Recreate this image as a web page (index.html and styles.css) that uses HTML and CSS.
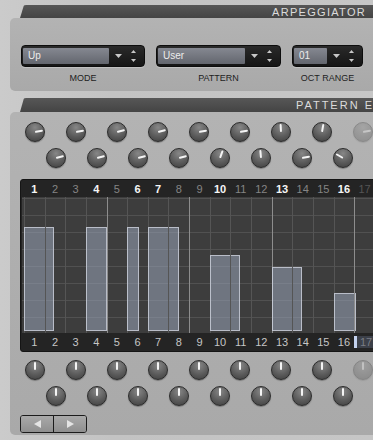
FILE: index.html
```html
<!DOCTYPE html>
<html lang="en">
<head>
    <meta charset="UTF-8">
    <meta name="viewport" content="width=device-width, initial-scale=1.0">
    <title>Arpeggiator</title>
    <link rel="stylesheet" href="styles.css">
</head>
<body>
    <div class="section arp">
        <div class="tab"><span>ARPEGGIATOR</span></div>
        <div class="panel arp-panel">
            <div class="control">
                <div class="select mode">
                    <div class="field">Up</div>
                    <svg class="drop" width="7" height="4" viewBox="0 0 7 4"><polygon points="0,0 7,0 3.5,4"/></svg>
                    <svg class="spin" width="5" height="12" viewBox="0 0 5 12"><polygon points="2.5,0 5,3 0,3"/><polygon points="0,9 5,9 2.5,12"/></svg>
                </div>
                <div class="label">MODE</div>
            </div>
            <div class="control">
                <div class="select pattern-sel">
                    <div class="field">User</div>
                    <svg class="drop" width="7" height="4" viewBox="0 0 7 4"><polygon points="0,0 7,0 3.5,4"/></svg>
                    <svg class="spin" width="5" height="12" viewBox="0 0 5 12"><polygon points="2.5,0 5,3 0,3"/><polygon points="0,9 5,9 2.5,12"/></svg>
                </div>
                <div class="label">PATTERN</div>
            </div>
            <div class="control">
                <div class="select oct">
                    <div class="field">01</div>
                    <svg class="drop" width="7" height="4" viewBox="0 0 7 4"><polygon points="0,0 7,0 3.5,4"/></svg>
                    <svg class="spin" width="5" height="12" viewBox="0 0 5 12"><polygon points="2.5,0 5,3 0,3"/><polygon points="0,9 5,9 2.5,12"/></svg>
                </div>
                <div class="label">OCT RANGE</div>
            </div>
        </div>
    </div>

    <div class="section wide">
        <div class="tab tall"><span>PATTERN EDITOR</span></div>
        <div class="panel pattern-panel">
            <div class="knobs">
                <div class="knob" style="--a:80deg"></div>
                <div class="knob" style="--a:80deg"></div>
                <div class="knob" style="--a:76deg"></div>
                <div class="knob" style="--a:75deg"></div>
                <div class="knob" style="--a:80deg"></div>
                <div class="knob" style="--a:80deg"></div>
                <div class="knob" style="--a:-3deg"></div>
                <div class="knob" style="--a:10deg"></div>
                <div class="knob off" style="--a:80deg"></div>
            </div>
            <div class="knobs offset">
                <div class="knob" style="--a:76deg"></div>
                <div class="knob" style="--a:75deg"></div>
                <div class="knob" style="--a:76deg"></div>
                <div class="knob" style="--a:75deg"></div>
                <div class="knob" style="--a:20deg"></div>
                <div class="knob" style="--a:-5deg"></div>
                <div class="knob" style="--a:80deg"></div>
                <div class="knob" style="--a:-60deg"></div>
            </div>

            <div class="editor">
                <div class="nums top">
                    <div class="num on">1</div>
                    <div class="num">2</div>
                    <div class="num">3</div>
                    <div class="num on">4</div>
                    <div class="num">5</div>
                    <div class="num on">6</div>
                    <div class="num on">7</div>
                    <div class="num">8</div>
                    <div class="num">9</div>
                    <div class="num on">10</div>
                    <div class="num">11</div>
                    <div class="num">12</div>
                    <div class="num on">13</div>
                    <div class="num">14</div>
                    <div class="num">15</div>
                    <div class="num on">16</div>
                    <div class="num dim">17</div>
                </div>
                <div class="grid">
                    <div class="step"><div class="bar" style="width:155%;height:104px"></div></div>
                    <div class="step"></div>
                    <div class="step"></div>
                    <div class="step"><div class="bar" style="width:107%;height:104px"></div></div>
                    <div class="step beat"></div>
                    <div class="step"><div class="bar" style="width:60%;height:104px"></div></div>
                    <div class="step"><div class="bar" style="width:160%;height:104px"></div></div>
                    <div class="step"></div>
                    <div class="step beat"></div>
                    <div class="step"><div class="bar" style="width:155%;height:76px"></div></div>
                    <div class="step"></div>
                    <div class="step"></div>
                    <div class="step beat"><div class="bar" style="width:155%;height:64px"></div></div>
                    <div class="step"></div>
                    <div class="step"></div>
                    <div class="step"><div class="bar" style="width:112%;height:38px"></div></div>
                    <div class="step beat"></div>
                    <div class="step"></div>
                </div>
                <div class="nums bottom">
                    <div class="num">1</div>
                    <div class="num">2</div>
                    <div class="num">3</div>
                    <div class="num">4</div>
                    <div class="num">5</div>
                    <div class="num">6</div>
                    <div class="num">7</div>
                    <div class="num">8</div>
                    <div class="num">9</div>
                    <div class="num">10</div>
                    <div class="num">11</div>
                    <div class="num">12</div>
                    <div class="num">13</div>
                    <div class="num">14</div>
                    <div class="num">15</div>
                    <div class="num">16</div>
                    <div class="num sel">17</div>
                </div>
            </div>

            <div class="knobs low">
                <div class="knob" style="--a:0deg"></div>
                <div class="knob" style="--a:0deg"></div>
                <div class="knob" style="--a:0deg"></div>
                <div class="knob" style="--a:0deg"></div>
                <div class="knob" style="--a:0deg"></div>
                <div class="knob" style="--a:0deg"></div>
                <div class="knob" style="--a:0deg"></div>
                <div class="knob" style="--a:0deg"></div>
                <div class="knob off" style="--a:0deg"></div>
            </div>
            <div class="knobs offset">
                <div class="knob" style="--a:0deg"></div>
                <div class="knob" style="--a:0deg"></div>
                <div class="knob" style="--a:0deg"></div>
                <div class="knob" style="--a:0deg"></div>
                <div class="knob" style="--a:0deg"></div>
                <div class="knob" style="--a:0deg"></div>
                <div class="knob" style="--a:0deg"></div>
                <div class="knob" style="--a:0deg"></div>
            </div>

            <div class="nav">
                <div class="btn"><svg width="7" height="8" viewBox="0 0 7 8"><polygon points="7,0 7,8 0,4"/></svg></div>
                <div class="btn"><svg width="7" height="8" viewBox="0 0 7 8"><polygon points="0,0 7,4 0,8"/></svg></div>
            </div>
        </div>
    </div>
</body>
</html>
```

FILE: styles.css
```css
body {
    margin: 0;
    padding-top: 5px;
    height: 440px;
    box-sizing: border-box;
    overflow: hidden;
    background: linear-gradient(90deg, #cbcbcb, #c3c3c3 30%, #c6c6c6);
    font-family: "Liberation Sans", Arial, sans-serif;
}

.section {
    margin-left: 10px;
}

.wide {
    margin-top: 7px;
    margin-right: -52px;
}

.tab {
    margin-left: 10px;
    height: 13px;
    padding-right: 7px;
    display: flex;
    justify-content: flex-end;
    align-items: center;
    background: linear-gradient(#575757, #444);
    border-top-left-radius: 6px;
    clip-path: polygon(4px 0, 100% 0, 100% 100%, 0 100%);
    color: #dcdcdc;
    font-size: 11px;
    letter-spacing: 1.3px;
    white-space: nowrap;
}

.tab.tall {
    height: 14px;
    letter-spacing: 2px;
}

.panel {
    background: linear-gradient(#b3b3b3, #a9a9a9);
    border-radius: 5px 0 0 5px;
}

.arp-panel {
    height: 73px;
    box-sizing: border-box;
    padding: 27px 0 0 11px;
    display: flex;
    gap: 11px;
}

.control {
    display: flex;
    flex-direction: column;
    align-items: center;
}

.select {
    height: 22px;
    box-sizing: border-box;
    display: flex;
    align-items: center;
    padding-left: 1px;
    background: linear-gradient(#2a2a2a, #151515);
    border: 1px solid #0d0d0d;
    border-radius: 4px;
    box-shadow: 0 1px 0 rgba(255, 255, 255, 0.25);
}

.select.mode { width: 124px; }
.select.pattern-sel { width: 125px; }
.select.oct { width: 71px; }

.field {
    flex: 1;
    height: 16px;
    line-height: 16px;
    padding-left: 5px;
    background: linear-gradient(#858891, #63666e);
    border-radius: 1px;
    color: #ececec;
    font-size: 10px;
}

.drop {
    margin: 0 9px 0 6px;
    fill: #c8c8c8;
}

.spin {
    margin-right: 8px;
    fill: #c8c8c8;
}

.label {
    margin-top: 6px;
    line-height: 11px;
    font-size: 9px;
    color: #1e1e1e;
}

.pattern-panel {
    padding: 10px 0 2px 0;
}

.knobs {
    display: flex;
    gap: 21px;
    padding-left: 15px;
}

.knobs.offset {
    padding-left: 36px;
    margin-top: 6px;
}

.knobs.low {
    margin-top: 8px;
}

.knob {
    flex: none;
    position: relative;
    width: 20px;
    height: 20px;
    box-sizing: border-box;
    border-radius: 50%;
    border: 1px solid #2b2b2b;
    background: radial-gradient(circle at 50% 25%, #878787, #5c5c5c 55%, #3d3d3d);
    box-shadow: 0 1px 1px rgba(0, 0, 0, 0.3);
}

.knob::after {
    content: "";
    position: absolute;
    left: 8px;
    top: 1px;
    width: 2px;
    height: 8px;
    border-radius: 1px;
    background: #f4f4f4;
    transform-origin: 1px 8px;
    transform: rotate(var(--a));
}

.knob.off {
    opacity: 0.3;
}

.editor {
    margin: 11px 0 0 10px;
    padding-left: 1px;
    background: #242424;
    border: 1px solid #151515;
    border-radius: 3px;
}

.nums {
    display: flex;
    align-items: center;
    height: 17px;
    padding-left: 2px;
    font-size: 11px;
}

.nums.bottom {
    height: 18px;
    color: #c4c4c4;
}

.num {
    flex: none;
    width: 20.65px;
    box-sizing: border-box;
    text-align: center;
    color: #858585;
}

.num.on {
    color: #f6f6f6;
    font-weight: bold;
}

.num.dim {
    color: #555;
}

.nums.bottom .num {
    color: #c6c6c6;
}

.nums.bottom .num.sel {
    height: 12px;
    line-height: 12px;
    border-left: 3px solid #c4d2ee;
    background: #3c4049;
    color: #7a7d84;
}

.grid {
    display: flex;
    height: 136px;
    padding-left: 2px;
    background-color: #3d3d3d;
    background-image: repeating-linear-gradient(to bottom, transparent 0, transparent 16px, #515151 16px, #515151 17px);
    background-position: 0 2px;
}

.step {
    flex: none;
    width: 20.65px;
    box-sizing: border-box;
    border-left: 1px solid #555;
    display: flex;
    flex-direction: column;
    justify-content: flex-end;
    align-items: flex-start;
    padding-bottom: 2px;
}

.step.beat {
    border-left-color: #8d8d8d;
}

.bar {
    flex: none;
    box-sizing: border-box;
    margin-left: -1px;
    background: rgba(158, 168, 190, 0.52);
    border: 1px solid rgba(210, 214, 224, 0.75);
}

.nav {
    display: flex;
    width: 67px;
    height: 18px;
    margin: 9px 0 0 10px;
    box-sizing: border-box;
    border: 1px solid #1b1b1b;
    border-radius: 3px;
    overflow: hidden;
}

.btn {
    flex: 1;
    display: flex;
    align-items: center;
    justify-content: center;
    background: linear-gradient(#a9a9a9, #8f8f8f);
    fill: #e4e4e4;
}

.btn + .btn {
    border-left: 1px solid #1b1b1b;
}
```
